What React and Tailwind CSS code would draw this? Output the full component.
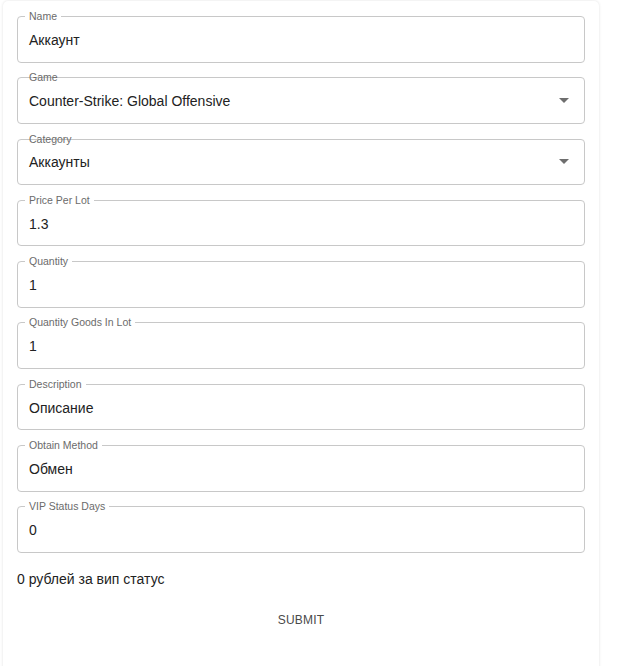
import React from "react";

function Field({ label, value, select, strike }) {
  return (
    <div className="relative h-[46.5px] rounded-[4px] border border-[#c8c8c8] flex items-center pl-[11px] pr-[12px] pt-[2px]">
      <span
        className={
          "absolute left-[7px] top-[-8px] px-[4px] text-[10.5px] leading-[14px] text-[#6b6b6b] " +
          (strike ? "" : "bg-white")
        }
      >
        {label}
      </span>
      <span className="flex-1 text-[14px] text-[#222222]">{value}</span>
      {select && (
        <svg width="10" height="5" viewBox="0 0 10 5" className="mr-[3px] mt-[-2px]">
          <path d="M0 0 L10 0 L5 5 Z" fill="#6e6e6e" />
        </svg>
      )}
    </div>
  );
}

export default function App() {
  const fields = [
    { label: "Name", value: "Аккаунт" },
    { label: "Game", value: "Counter-Strike: Global Offensive", select: true, strike: true },
    { label: "Category", value: "Аккаунты", select: true, strike: true },
    { label: "Price Per Lot", value: "1.3" },
    { label: "Quantity", value: "1" },
    { label: "Quantity Goods In Lot", value: "1" },
    { label: "Description", value: "Описание" },
    { label: "Obtain Method", value: "Обмен" },
    { label: "VIP Status Days", value: "0" },
  ];
  return (
    <div
      className="h-[666px] overflow-hidden bg-white pt-[1px]"
      style={{ fontFamily: '"Liberation Sans", Arial, sans-serif' }}
    >
      <div className="ml-[3px] w-[596px] h-[700px] rounded-[5px] bg-white shadow-[0_0_3px_rgba(0,0,0,0.12)] px-[14px] pt-[15px]">
        <div className="flex flex-col gap-[14.8px]">
          {fields.map((f) => (
            <Field key={f.label} {...f} />
          ))}
        </div>
        <div className="mt-[16px] text-[14px] leading-[20px] text-[#222222]">
          0 рублей за вип статус
        </div>
        <div className="mt-[17px] flex justify-center">
          <button className="px-[8px] py-[6px] text-[12px] leading-[16px] tracking-[0.2px] text-[#4a4a4a]">
            SUBMIT
          </button>
        </div>
      </div>
    </div>
  );
}
